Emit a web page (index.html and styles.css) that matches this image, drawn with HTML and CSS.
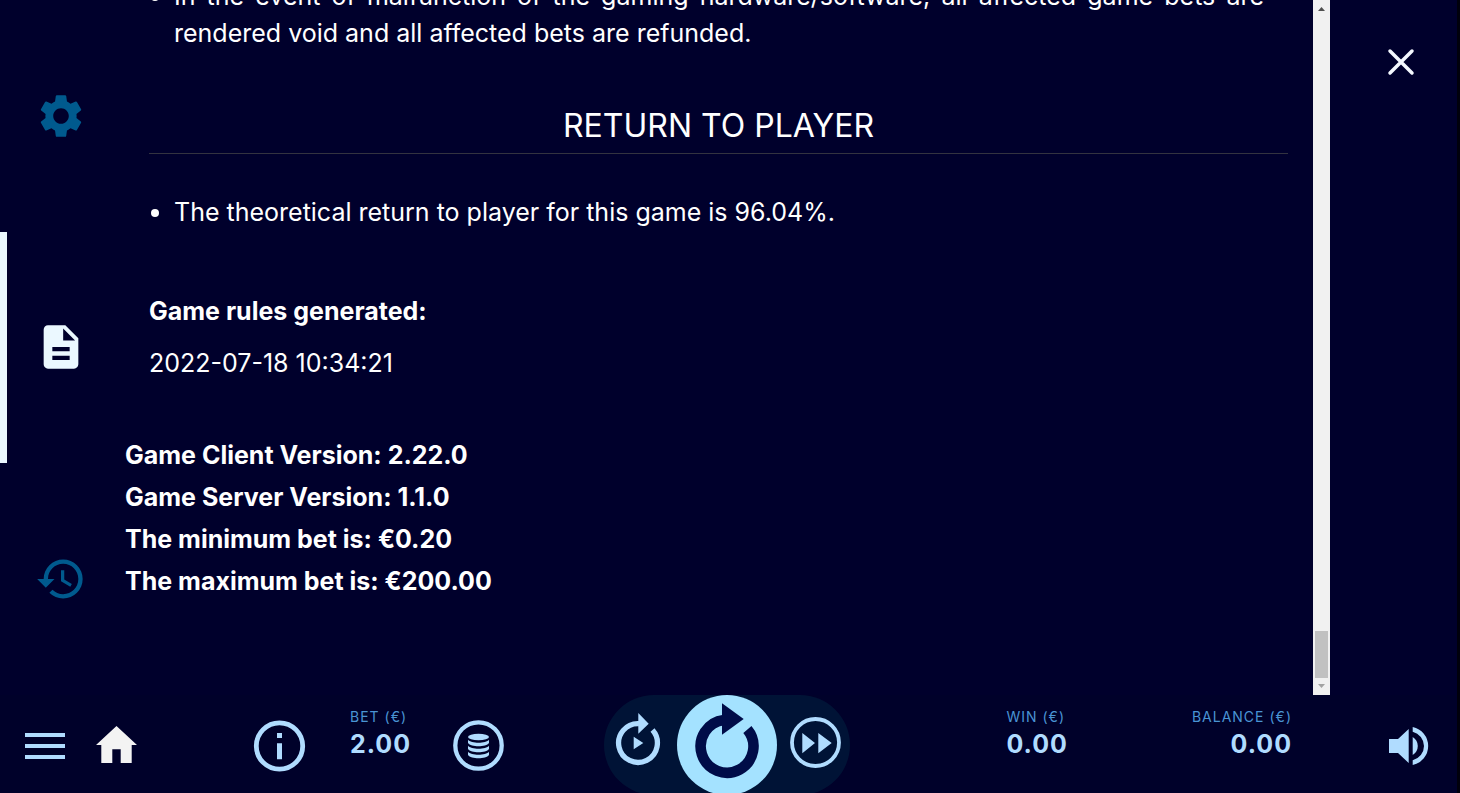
FILE: index.html
```
<!DOCTYPE html>
<html lang="en">
<head>
    <meta charset="UTF-8">
    <meta name="viewport" content="width=device-width, initial-scale=1.0">
    <title>Game Rules</title>
    <link rel="stylesheet" href="styles.css">
</head>
<body>
    <div class="game-menu">
        <nav class="tabs">
            <button class="tab" aria-label="Settings">
                <svg viewBox="0 0 24 24"><path d="M19.14 12.94c.04-.3.06-.61.06-.94 0-.32-.02-.64-.07-.94l2.03-1.58c.18-.14.23-.41.12-.61l-1.92-3.32c-.12-.22-.37-.29-.59-.22l-2.39.96c-.5-.38-1.03-.7-1.62-.94l-.36-2.54c-.04-.24-.24-.41-.48-.41h-3.84c-.24 0-.43.17-.47.41l-.36 2.54c-.59.24-1.13.57-1.62.94l-2.39-.96c-.22-.08-.47 0-.59.22L2.74 8.87c-.12.21-.08.47.12.61l2.03 1.58c-.05.3-.09.63-.09.94s.02.64.07.94l-2.03 1.58c-.18.14-.23.41-.12.61l1.92 3.32c.12.22.37.29.59.22l2.39-.96c.5.38 1.03.7 1.62.94l.36 2.54c.05.24.24.41.48.41h3.84c.24 0 .44-.17.47-.41l.36-2.54c.59-.24 1.13-.56 1.62-.94l2.39.96c.22.08.47 0 .59-.22l1.92-3.32c.12-.22.07-.47-.12-.61l-2.01-1.58zM12 15.6c-1.98 0-3.6-1.62-3.6-3.6s1.62-3.6 3.6-3.6 3.6 1.62 3.6 3.6-1.62 3.6-3.6 3.6z"/></svg>
            </button>
            <button class="tab active" aria-label="Game rules">
                <svg viewBox="0 0 24 24"><path d="M14 2H6c-1.100 0-2 .9-2 2v16c0 1.100.9 2 2 2h12c1.100 0 2-.9 2-2V8l-6-6zm2 16H8v-2h8v2zm0-4H8v-2h8v2zm-3-5V3.500L18.500 9H13z"/></svg>
            </button>
            <button class="tab" aria-label="History">
                <svg viewBox="0 0 24 24"><path d="M13 3a9 9 0 0 0-9 9H1l3.890 3.890.07.14L9 12H6c0-3.870 3.130-7 7-7s7 3.130 7 7-3.130 7-7 7c-1.930 0-3.680-.79-4.940-2.060l-1.420 1.420A8.954 8.954 0 0 0 13 21a9 9 0 0 0 0-18zm-1 5v5l4.280 2.540.72-1.210-3.500-2.080V8H12z"/></svg>
            </button>
        </nav>

        <main class="rules">
            <section class="rules-body">
                <ul>
                    <li>In the event of malfunction of the gaming hardware/software, all affected game bets are rendered void and all affected bets are refunded.</li>
                </ul>
                <h2>RETURN TO PLAYER</h2>
                <ul>
                    <li>The theoretical return to player for this game is 96.04%.</li>
                </ul>
                <p class="generated"><strong>Game rules generated:</strong></p>
                <p>2022-07-18 10:34:21</p>
            </section>
            <section class="versions">
                <div>Game Client Version: 2.22.0</div>
                <div>Game Server Version: 1.1.0</div>
                <div>The minimum bet is: €0.20</div>
                <div>The maximum bet is: €200.00</div>
            </section>
        </main>

        <div class="scroll-track" aria-hidden="true">
            <svg class="arrow-up" viewBox="0 0 17 17"><path d="M5 11h7L8.500 7z"/></svg>
            <div class="scroll-thumb"></div>
            <svg class="arrow-down" viewBox="0 0 17 17"><path d="M5 6h7l-3.500 4z"/></svg>
        </div>

        <div class="close-column">
            <button class="close" aria-label="Close">
                <svg viewBox="0 0 26 26"><path d="M2 2l22 22M24 2L2 24"/></svg>
            </button>
        </div>
    </div>

    <footer class="bar">
        <div class="bar-left">
            <button class="menu" aria-label="Menu">
                <svg width="40" height="56"><path d="M0 17h40v4H0zM0 28h40v4H0zM0 39h40v4H0z"/></svg>
            </button>
            <button class="home" aria-label="Home">
                <svg width="41" height="56"><path d="M20.500 10L41 29h-5.300v18H24.700V33.300h-8.400V47H5.300V29H0z"/></svg>
            </button>
            <button class="info" aria-label="Info">
                <svg width="51" height="56">
                    <circle class="ring" cx="25.500" cy="30" r="23.200" stroke-width="4.800"/>
                    <path d="M23 17h5v5h-5zM23 27.300h5v16h-5z"/>
                </svg>
            </button>
            <div class="amount">
                <span class="label">BET (€)</span>
                <span class="value">2.00</span>
            </div>
            <button class="coins" aria-label="Bet settings">
                <svg width="51" height="56">
                    <circle class="ring" cx="25.500" cy="29.500" r="23.200" stroke-width="4.300"/>
                    <ellipse cx="25.500" cy="21" rx="10.500" ry="3.200"/>
                    <path d="M15 23.800c3 4 18 4 21 0v3.200c-3 4.400-18 4.400-21 0zM15 29.800c3 4 18 4 21 0v3.200c-3 4.400-18 4.400-21 0zM15 35.800c3 4 18 4 21 0v3.200c-3 4.400-18 4.400-21 0z"/>
                </svg>
            </button>
        </div>

        <div class="spin-controls">
            <button aria-label="Autoplay">
                <svg width="50" height="66">
                    <path class="ring" stroke-width="5.300" d="M38.500 18.100A19.400 19.400 0 1 1 25 11.600"/>
                    <path d="M24.300 1l10.400 10.700-10.400 10zM19.700 24.700l9.600 6.300-9.600 6.300z"/>
                </svg>
            </button>
            <button class="spin" aria-label="Spin">
                <svg width="100" height="100">
                    <path class="ring" stroke-width="10.600" d="M70.400 34.500A26.400 26.400 0 1 1 47 25.100"/>
                    <path d="M45 8.300L66.700 24 45 39.700z"/>
                </svg>
            </button>
            <button aria-label="Turbo">
                <svg width="51" height="66">
                    <circle class="ring" cx="25.500" cy="30.500" r="23.500" stroke-width="3.800"/>
                    <path d="M12.300 21L25 31 12.300 41.300zM28.300 21l13.400 10-13.400 10.300z"/>
                </svg>
            </button>
        </div>

        <div class="bar-right">
            <div class="amount">
                <span class="label">WIN (€)</span>
                <span class="value">0.00</span>
            </div>
            <div class="amount balance">
                <span class="label">BALANCE (€)</span>
                <span class="value">0.00</span>
            </div>
            <button class="sound" aria-label="Sound">
                <svg width="40" height="56"><path d="M0 23h9l10.700-10v34L9 37H0zM23.700 21a10.500 10.500 0 0 1 0 18zM23.700 11a19.400 19.400 0 0 1 0 38v-4.700a14.700 14.700 0 0 0 0-28.600z"/></svg>
            </button>
        </div>
    </footer>
</body>
</html>
```
FILE: styles.css
```
* {
    box-sizing: border-box;
}

body {
    margin: 0;
    height: 100vh;
    display: flex;
    flex-direction: column;
    overflow: hidden;
    font-family: Inter, sans-serif;
    color: #fff;
    background-color: #00002c;
    border-right: 3px solid #00000c;
}

button {
    display: flex;
    padding: 0;
    border: none;
    background: none;
    color: inherit;
    cursor: pointer;
}

svg {
    display: block;
    fill: currentColor;
    overflow: visible;
}

.ring {
    fill: none;
    stroke: currentColor;
}

.game-menu {
    flex: 1;
    min-height: 0;
    display: flex;
}

/* Left tabs */
.tabs {
    width: 121px;
    display: grid;
    grid-template-rows: repeat(3, 1fr);
}

.tab {
    align-items: center;
    justify-content: center;
    color: #005a8e;
}

.tab svg {
    width: 52px;
    height: 52px;
}

.tab.active {
    color: #ebf8ff;
    box-shadow: inset 7px 0 #ebf8ff;
}

/* Rules text, scrolled to the end */
.rules {
    flex: 1;
    min-width: 0;
    display: flex;
    flex-direction: column;
    justify-content: flex-end;
    overflow: hidden;
    padding: 0 0 93px 4px;
    font-size: 25px;
    line-height: 37px;
}

.rules-body {
    padding: 0 25px 0 24px;
}

.rules ul {
    margin: 0;
    padding: 0 24px 0 25px;
    text-align: justify;
}

.rules h2 {
    margin: 54px 0 40px;
    padding-bottom: 7px;
    border-bottom: 1px solid #333340;
    font-size: 32px;
    font-weight: 400;
    line-height: 40px;
    text-align: center;
}

.rules p {
    margin: 15px 0 0;
}

.rules .generated {
    margin-top: 62px;
}

.versions {
    margin-top: 52px;
    font-weight: 700;
    line-height: 42px;
}

.scroll-track {
    width: 17px;
    display: flex;
    flex-direction: column;
    background-color: #f1f1f1;
}

.scroll-track svg {
    height: 17px;
}

.arrow-up {
    fill: #505050;
}

.arrow-down {
    fill: #a3a3a3;
}

.scroll-thumb {
    height: 47px;
    margin: auto 2px 0;
    background-color: #c1c1c1;
}

.close-column {
    width: 127px;
    display: flex;
    justify-content: flex-end;
    align-items: flex-start;
    padding: 49px 43px 0 0;
}

.close svg {
    width: 26px;
    height: 26px;
    stroke: #f4f8ff;
    stroke-width: 3.5;
    stroke-linecap: round;
}

/* Bottom bar */
.bar {
    height: 98px;
    display: grid;
    grid-template-columns: 1fr auto 1fr;
    grid-template-rows: 98px;
    padding: 0 28px 0 25px;
    overflow: hidden;
    color: #b0dcff;
    background-color: #00012a;
}

.bar-left,
.bar-right {
    display: flex;
    align-items: center;
}

.bar-right {
    justify-content: flex-end;
}

.home {
    margin-left: 31px;
    color: #f3f3f3;
}

.info {
    margin: 0 45px 0 117px;
}

.coins {
    margin-left: 42px;
}

.amount {
    align-self: flex-start;
    display: flex;
    flex-direction: column;
    padding-top: 12px;
}

.label {
    font-size: 14px;
    line-height: 20px;
    letter-spacing: 1px;
    color: #4a94d4;
}

.value {
    font-size: 25px;
    font-weight: 700;
    line-height: 34px;
    letter-spacing: 1px;
}

.balance {
    margin: 0 97px 0 124px;
    text-align: right;
}

.spin-controls {
    height: 100px;
    display: flex;
    align-items: center;
    gap: 13px;
    padding: 0 9px 0 10px;
    border-radius: 50px;
    background-color: #001336;
}

.spin {
    border-radius: 50%;
    color: #000c48;
    background-color: #a4e2ff;
}
```
